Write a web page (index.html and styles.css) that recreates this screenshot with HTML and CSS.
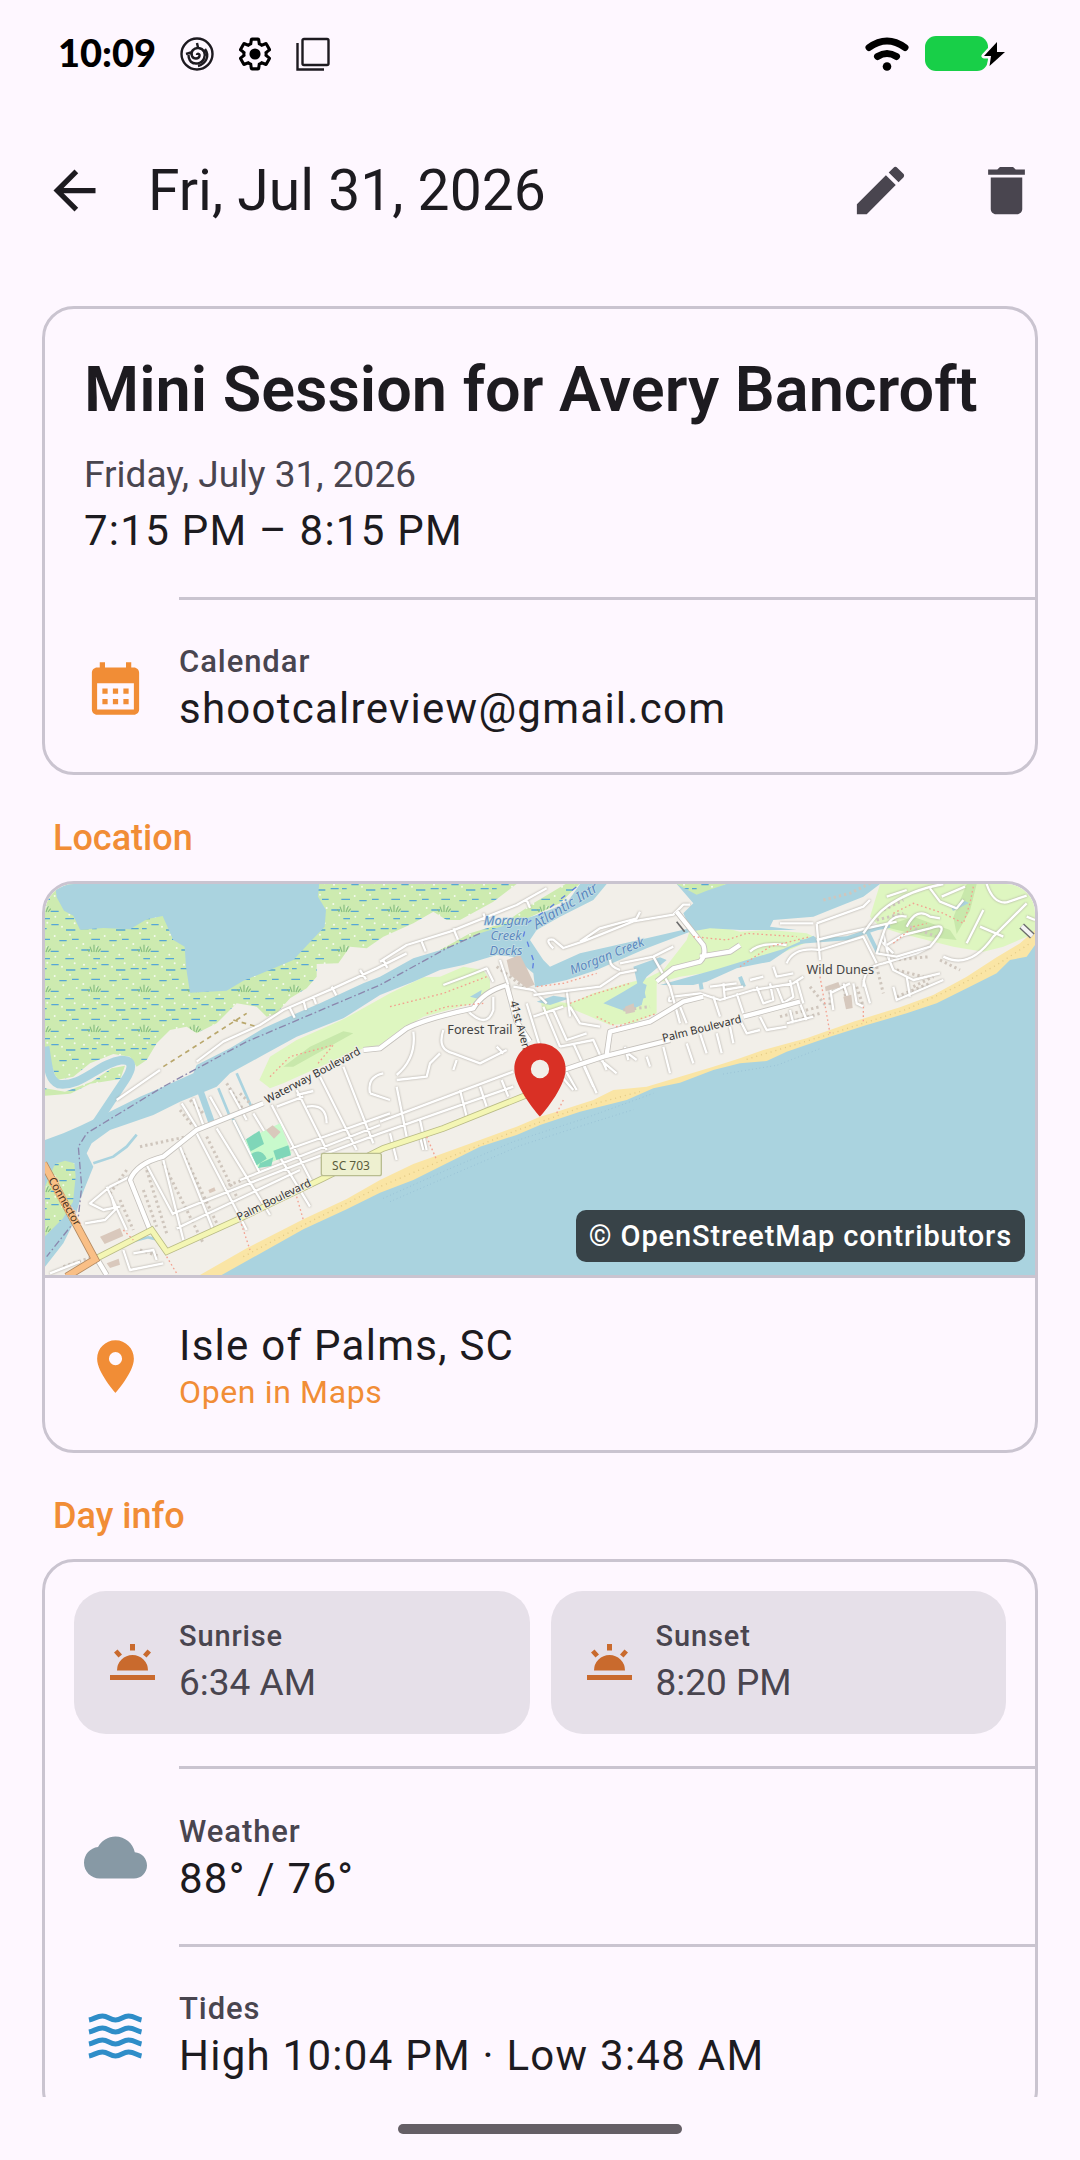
FILE: index.html
```html
<!DOCTYPE html>
<html lang="en">
  <head>
    <meta charset="UTF-8" />
    <meta name="viewport" content="width=device-width, initial-scale=1.0" />
    <title>Fri, Jul 31, 2026</title>

    <link rel="stylesheet" href="styles.css">
  </head>
  <body>
    <!-- status bar -->
    <div class="status">
      <span class="clock">10:09</span>
      <svg class="s-icon" viewBox="0 0 34 34" fill="none" stroke="#1d1a20" stroke-width="2.400">
        <circle cx="17" cy="17" r="15.5" />
        <path d="M17 18c0-2 3-1.500 2.500 1-.6 3-6 3.500-7.500 0-1.800-4.500 2-8.500 6.500-8 5.500.6 7.500 6 5.500 10.500-2.500 5.500-9.500 6.500-13.500 3M6 17l5-1.500M17 6l1 4.500M8.500 18c0 4 2 7 5 8.500M25 12c5 7 1 15-7 17" />
      </svg>
      <svg class="s-icon" viewBox="1 1 22 22">
        <path fill="none" stroke="#000" stroke-width="2" d="M19.14 12.94c.04-.3.06-.61.06-.94 0-.32-.02-.64-.07-.94l2.030-1.580c.18-.14.23-.41.12-.61l-1.920-3.320c-.12-.22-.37-.29-.59-.22l-2.390.96c-.5-.38-1.030-.7-1.620-.94l-.36-2.540c-.04-.24-.24-.41-.48-.41h-3.840c-.24 0-.43.17-.47.41l-.36 2.540c-.59.24-1.130.57-1.620.94l-2.390-.96c-.22-.08-.47 0-.59.22L2.740 8.870c-.12.21-.08.47.12.61l2.030 1.580c-.05.3-.09.63-.09.94s.02.64.07.94l-2.030 1.580c-.18.14-.23.41-.12.61l1.920 3.320c.12.22.37.29.59.22l2.390-.96c.5.38 1.030.7 1.620.94l.36 2.540c.05.24.24.41.48.41h3.840c.24 0 .44-.17.47-.41l.36-2.540c.59-.24 1.130-.56 1.620-.94l2.390.96c.22.08.47 0 .59-.22l1.920-3.320c.12-.22.07-.47-.12-.61l-2.010-1.580z" />
        <circle cx="12" cy="12" r="3.600" />
      </svg>
      <svg class="s-icon" viewBox="0 0 34 34" fill="none" stroke="#1d1a20" stroke-width="2.400">
        <rect x="6.500" y="2" width="26" height="26" rx="1.500" />
        <path d="M1.500 6v26.500H28" />
      </svg>
      <svg class="wifi" viewBox="0 0 44 34" fill="none" stroke="#000" stroke-width="7" stroke-linecap="round">
        <path d="M4 10.500Q22-2.500 40 10.500M12.500 19.500Q22 13.500 31.500 19.500" />
        <circle cx="22" cy="29.500" r="4.300" fill="#000" stroke="none" />
      </svg>
      <svg class="battery" viewBox="0 0 80 36">
        <rect y="0" width="63" height="35" rx="11" fill="#18cf48" />
        <path d="M72 6L59 20h7l-1.500 10L80 16h-8z" fill="#000" stroke="#fef7ff" stroke-width="5" stroke-linejoin="round" paint-order="stroke" />
      </svg>
    </div>

    <!-- top app bar -->
    <header class="app-bar">
      <button class="icon-btn back" aria-label="Back">
        <svg viewBox="0 0 24 24"><path d="M20 11H7.830l5.590-5.590L12 4l-8 8 8 8 1.410-1.410L7.830 13H20v-2z" /></svg>
      </button>
      <h1 class="bar-title">Fri, Jul 31, 2026</h1>
      <button class="icon-btn" aria-label="Edit">
        <svg viewBox="0 0 24 24"><path d="M3 17.250V21h3.750L17.810 9.940l-3.750-3.750L3 17.250zM20.710 7.040c.39-.39.39-1.020 0-1.410l-2.340-2.340c-.39-.39-1.020-.39-1.410 0l-1.830 1.830 3.750 3.750 1.830-1.830z" /></svg>
      </button>
      <button class="icon-btn" aria-label="Delete">
        <svg viewBox="0 0 24 24"><path d="M6 19c0 1.100.9 2 2 2h8c1.100 0 2-.9 2-2V7H6v12zM19 4h-3.500l-1-1h-5l-1 1H5v2h14V4z" /></svg>
      </button>
    </header>

    <main class="content">
      <!-- session card -->
      <section class="card first">
        <div class="session">
          <h2>Mini Session for Avery Bancroft</h2>
          <p class="date">Friday, July 31, 2026</p>
          <p class="value">7:15 PM – 8:15 PM</p>
        </div>
        <hr />
        <div class="row">
          <svg class="row-icon orange" viewBox="0 0 24 24"><path fill-rule="evenodd" d="M19 4h-1V2h-2v2H8V2H6v2H5c-1.110 0-2 .9-2 2v14c0 1.100.89 2 2 2h14c1.100 0 2-.9 2-2V6c0-1.100-.9-2-2-2zm0 16H5V10h14v10zM7 12h2v2H7zM11 12h2v2h-2zM15 12h2v2h-2zM7 16h2v2H7zM11 16h2v2h-2zM15 16h2v2h-2z" /></svg>
          <div class="row-text">
            <p class="label">Calendar</p>
            <p class="value">shootcalreview@gmail.com</p>
          </div>
        </div>
      </section>

      <h3 class="section-title">Location</h3>
      <section class="card">
        <div class="map">
          <svg class="map-art" viewBox="45 252 2970 1173" preserveAspectRatio="xMidYMid slice">
            <defs>
              <pattern id="marsh" width="150" height="120" patternUnits="userSpaceOnUse">
                <rect width="150" height="120" fill="#cdebb0" />
                <g fill="#f6faf0">
                  <circle cx="12" cy="14" r="3" /><circle cx="52" cy="8" r="3" /><circle cx="96" cy="20" r="3" /><circle cx="134" cy="10" r="3" />
                  <circle cx="30" cy="40" r="3" /><circle cx="74" cy="48" r="3" /><circle cx="120" cy="44" r="3" />
                  <circle cx="10" cy="72" r="3" /><circle cx="52" cy="80" r="3" /><circle cx="100" cy="76" r="3" /><circle cx="140" cy="84" r="3" />
                  <circle cx="28" cy="106" r="3" /><circle cx="76" cy="110" r="3" /><circle cx="118" cy="104" r="3" />
                </g>
                <path d="M2 26h24M64 14h22M108 30h28M34 58h26M88 62h22M126 58h20M4 90h26M62 94h24M106 116h26M40 116h20M36 26h14" stroke="#55a6d6" stroke-width="4" />
                <path d="M36 96l-6-16M42 96V74M48 96l7-18M54 96l8-10M28 96l-6-8" stroke="#86bd80" stroke-width="3.500" fill="none" />
              </pattern>
            </defs>

            <rect x="45" y="252" width="2970" height="1173" fill="#f2efe9" />

            <!-- marsh and lagoon -->
            <g fill="url(#marsh)">
              <path d="M45 252H1460L1390 305 1290 360 1250 360 1210 335 1150 370 1060 410 1010 445 960 440 925 490 860 492 860 530 830 565 780 595 740 640 710 650 680 620 620 610 560 670 500 700 470 680 420 690 380 730 350 780 320 800 300 770 250 762 180 790 130 830 80 840 45 740z" />
              <path d="M45 865l60 10 80-30 60-40 40-8-14 40-90 14-60 30-76 6z" />
              <path d="M1230 450l90-50 100-30 90-60 100-60h40l-60 60-130 60-110 60-100 28z" />
            </g>
            <path fill="#aad3df" d="M75 252l5 40 22 40 28 15 20 42 70-5 80 4 50-30 48-10 32 72 34 20 4 60 12 78 110-6 50-30 70-28 80-34 56-60 38-40 4-50-24-40 4-43z" />

            <!-- golf courses -->
            <g fill="#def6c0">
              <path d="M688 840L720 770 800 720 940 658 1080 580 1180 532 1230 530 1300 500 1360 510 1380 540 1380 570 1330 610 1180 650 1110 690 1050 735 1000 745 860 805 760 850 720 865z" />
              <path d="M1530 600L1620 610 1690 580 1790 550 1850 535 1900 510 1970 420 1980 390 2050 375 2130 395 2220 390 2330 400 2360 415 2230 470 2050 515 1950 530 1880 550 1880 640 1810 670 1740 675 1670 645 1610 620 1540 635z" />
              <path d="M2550 252H3015V400L2920 440 2860 455 2770 440 2690 420 2610 400 2550 380 2520 350z" />
            </g>
            <g fill="#c8e8ab">
              <path d="M760 800L840 740 940 694 970 700 880 750 790 800zM2560 380L2650 350 2760 390 2780 420 2690 410zM2810 252h30l-20 80-40 70-10-50z" />
            </g>

            <!-- water -->
            <g fill="#aad3df">
              <path d="M45 1020L100 1000 150 978 230 940 330 890 400 860 490 820 500 795 600 745 700 685 800 640 870 610 1000 550 1050 530 1150 475 1250 445 1350 400 1450 368 1520 345 1610 310 1650 252H1730L1690 300 1590 350 1520 390 1500 420 1540 480 1560 500 1650 460 1850 415 1980 385 1960 340 1990 310 1940 252H2550L2500 290 2400 330 2350 350 2230 360 2220 380 2300 390 2130 390 2040 385 1980 395 1850 445 1700 510 1610 540 1515 562 1510 520 1450 470 1400 465 1300 495 1230 510 1150 545 1050 585 940 655 800 710 700 765 600 820 560 860 450 905 370 945 240 990 185 1030 170 1060 190 1100 170 1150 150 1200 130 1270 100 1330 45 1400z" />
              <path d="M1720 610L1780 575 1830 545 1850 555 1835 615 1790 635zM1320 590l35-20-5 28zM1890 555L2070 505 2160 477 2260 447 2350 407 2360 415 2280 445 2220 485 2120 505 2030 545 1990 555zM1520 605l50-18 50 8-60 20zM1810 500l80-28 20 8-60 50-20 30-10-30zM2765 325l40-22 12 6-48 24z" />
            </g>
            <path fill="url(#marsh)" d="M45 1160L75 1092 105 1082 133 1090 137 1130 129 1205 99 1255 45 1309z" />
            <path fill="url(#marsh)" d="M1940 252h150l-60 20-30 12z" />
            <g fill="none" stroke="#aad3df">
              <path d="M45 740c10 60 10 100 40 112 70 10 120-62 190-72 40 0 30 30 10 60l-100 150" stroke-width="26" />
              <path d="M510 870l34 95" stroke-width="20" />
              <path d="M565 865l35 85M620 820l44 100M608 955l70 140M285 1330l70-18 40 10" stroke-width="8" />
              <path d="M190 1090l60-20 40-30 30-36" stroke-width="8" />
              <path d="M2310 425l140-10 90-30 40-8M2510 390l35 70M2130 530l12 30M2010 540l5 28" stroke-width="12" />
              <path d="M1820 505l20 90" stroke-width="16" />
            </g>
            <path d="M1350 400L1250 445 1050 555 650 725 400 860 170 1000 145 1040 155 1160 145 1250 50 1370" fill="none" stroke="#8b87ad" stroke-width="4" stroke-dasharray="22 8 5 8" />
            <path d="M1480 410l10-40 60-40 100-78M1510 480l-20-60M1508 505l4-30" fill="none" stroke="#5f7fe0" stroke-width="4" stroke-dasharray="16 26" />

            <!-- beach and ocean -->
            <path fill="#fae5a5" d="M510 1425L650 1345 820 1258 950 1197 1050 1140 1150 1092 1240 1060 1350 1020 1460 980 1530 950 1590 932 1690 900 1750 870 1850 860 1950 830 2050 800 2130 775 2200 750 2330 715 2470 665 2610 622 2710 585 2810 530 2900 472 2970 430 3015 390V1425z" />
            <path fill="#aad3df" d="M575 1425L700 1355 820 1288 950 1228 1050 1178 1150 1140 1240 1095 1350 1040 1460 1005 1530 975 1650 935 1790 900 1870 865 1950 848 2050 810 2130 790 2210 783 2270 755 2400 710 2510 675 2630 640 2720 610 2830 555 2900 520 2940 480 2990 470 3015 435V1425z" />
            <path d="M1060 1195l190-85 200-85 200-65 220-80M1080 1205l180-78 210-90 180-58 160-50M2080 822l160-26 130-50" fill="none" stroke="#93bcd3" stroke-width="3" stroke-dasharray="2 9" />
            <path d="M640 1370L820 1275 1050 1160 1250 1075 1450 995 1650 923 1830 875M2150 778L2400 702 2630 628 2780 560 2900 495 3000 430" fill="none" stroke="#e2c984" stroke-width="4" stroke-dasharray="3 12" />

            <!-- buildings -->
            <g class="houses">
              <path d="M330 1040l140-30M290 1110l-50 70M400 1090l120 240M350 1110l60 190M460 1060l110 230M530 1010l100 200M580 1160l60-20M340 1170l40 110M450 930l40 50M480 900l40 40M590 850l50 80M630 880l40 40M100 1400l90-30M330 1350l60 20M430 1350l170-80M270 1200l40 90" />
              <path d="M2250 650l120-30M2270 670l100-30M2340 560l50 60M2400 560v60M2440 550l10 60M2480 560l20 60M2590 480l110-10M2600 510l80 20M2650 560l60-30M2540 500l20 80M2730 480l60 30M2600 590l100-40M2380 300l80-20 60-30" />
              <path d="M2560 330l60-30M2540 360l80-20M2640 380l80 30M1400 500l80 60M1440 480l50 60M1780 630l80-10" />
            </g>

            <!-- minor roads -->
            <g class="roads">
              <path d="M260 900l130-90M500 785l80-60 110-50 70-45 150-65 130-60 90-45M780 625l14 28M820 600l8 30M850 590l8 22M905 560l14 26M990 510l18 28M1060 480l12 24
                M1050 485l80-50 130-40 200-80 90-50M1175 425l12 30M1270 385l14 34M1360 340l12 30M1490 300l10 24
                M500 1000l150 290M560 985l160 260M610 960l80 160M670 940l170 280M725 915l120 230M450 1040l100 250M400 1080l60 240M350 1095l80 150M455 910l50 80M490 895l30 80M540 890l40 70M600 870l50 90
                M430 1240l380-150 240-90M440 1285l370-175M630 1140l420-165M770 1050l310-110M800 870l90 180M870 830l110 220M940 800l90 230M800 885l50-12M830 920q60-10 60 50M740 920l80-30
                M300 1130l-60 30-60 50 40 20 50-10M230 1160l60 130M165 1270l60-10 30-30-10-40M280 1350l20 60 100-20M310 1360l60-10 10 30M60 1420l90-35
                M1020 880q-10-50 40-60M1020 880l60 20M1150 695q10 80-50 130M1310 630q60 60 80 0v-40M1240 690q-20 60 30 70l80 30 80-40M1230 760l-30 30-10 40-90 10M1280 780l-10 30M1400 740l20 20
                M1050 965l400-150M1050 1000l400-140M1100 860l30 150M1170 960l20 90M1290 870l20 80M1350 860l20 60M1415 840l20 50M1080 1000l20 80M1180 1050l-10-40
                M1240 555l80-30 50-20 20 40M1450 560l60 10 40 40M1410 480l30 90M1490 610l40 130M1540 620l50 120M1570 630l40 90 60-20M1510 650l90-30M1610 570l10 80M1620 620l30 50 60 10
                M1590 740l100-20 40 90M1630 730l60 130M1660 790l40 90M1700 770l60 50M1560 790l70 80M1600 800l40 70
                M1785 740l10 40M1850 770l10 30M1900 740l20 80M1970 730l20 60M2010 700l20 60M2060 700l15 60M1780 750l40 30
                M1930 590l80-10 60 20 100-30 120-20 30-20M1930 600q-20 10-10-10M1950 620l20 50M2050 590l20 60M2040 560l80-10M2080 550l5 50M2120 580l20 60M2180 560l20 50 30-10-10-50M2240 560l20 50 30-20-10-50M2160 540l40-10M2230 500l10 30 50-10M2080 570l60-10
                M2100 680l10 50M2130 660l20 40 40-10M2190 650l20 40 60-10M2280 630l10 40M2310 610l20 50M2300 540l20 70M2270 670l80-20
                M2500 560q0-60 60-70l100-30 40-20M2570 460l20 50 60 30 80-20M2560 400l20 90M2550 420l40 40M2590 560l10 40 140-60M2630 530l10 60M2470 550l10 60 20 10M2400 560l10 70M2440 550l20 60M2500 540l20 70M2400 580l60-30" />
              <path d="M1570 445q-30-30 0-26l30 25 60-20 150-60 120-20 30-30 20 0M1650 425l60-40 110-30 10-20M1770 490l100-20 60-30M1510 585l200-25 60-40 50-10M1870 470l50 90 30 110M1770 510q-30-10-30-30" />
              <path d="M2160 455q30-30 110-20M2250 370h100M2360 370l10 110M2360 370l140-50 20-20M2360 420l60-15 180-40M2270 490q20-50 100-40l130-40 40 80M2560 400q20-60 70-50M2560 400l-20 60 60 10 100-30q70-80 0-55l-80 20-50 30" />
              <path d="M2500 400q40-60 70-80 70-50 170-68M2630 380q30-60 70-30l30 5M2570 290l60-20M2700 265l30 40 50 20 20-25M2735 290l70-30M2740 470q80 40 150-60l100-100M2860 330l-40 80-10 20M2850 380l70 30M2870 252q20 60 60 55l60-20M2990 350l25 10" />
            </g>

            <!-- main roads: casing first, then the white fill -->
            <g class="main-casing">
              <path d="M230 1425l-30-50M360 1290l-60-150q20-50 100-70l100-80 200-80M1000 750l50-5 80-60q60-30 200-60 30-50 100-70M1430 555l30 110 40 60M1600 810l120-40 200-50M2140 650l170-45M1880 545l50-40 80-20q20-20 10-50l-80-100M2010 470l90-15 30-20M1730 765l10-70 120-30 100-60 60-15" />
            </g>
            <g class="main-fill">
              <path d="M230 1425l-30-50M360 1290l-60-150q20-50 100-70l100-80 200-80M1000 750l50-5 80-60q60-30 200-60 30-50 100-70M1430 555l30 110 40 60M1600 810l120-40 200-50M2140 650l170-45M1880 545l50-40 80-20q20-20 10-50l-80-100M2010 470l90-15 30-20M1730 765l10-70 120-30 100-60 60-15" />
            </g>
            <path d="M200 1375L365 1290 410 1355 620 1260 880 1135 1060 1045 1240 985 1490 885" fill="none" stroke="#b9bb86" stroke-width="20" />
            <path d="M200 1375L365 1290 410 1355 620 1260 880 1135 1060 1045 1240 985 1490 885" fill="none" stroke="#f4f6b4" stroke-width="15" />
            <path d="M40 1090l155 288-85 52" fill="none" stroke="#b38a62" stroke-width="24" />
            <path d="M40 1090l155 288-85 52" fill="none" stroke="#f9bf86" stroke-width="19" />
            <path d="M2975 378l32 30" stroke="#6b6b6b" stroke-width="20" />
            <path d="M2975 378l32 30" stroke="#f4f4f4" stroke-width="12" />
            <path d="M1940 365l24 30" stroke="#6b6b6b" stroke-width="5" />

            <!-- footpaths -->
            <path class="path" d="M720 830l60-60 130-35-50 60M1080 620l160-40 130-50M1190 640l60-20 110-10M1520 560l80-10 100-30M1620 610l80-30 100-30M1700 650l60 30 120-40M1990 410l100 10 60-20 150 10M2130 500l90-60 120-30M2590 340l60-30 90 30 60 30 20-60 10-50M2590 430l60-50 40-10" />
            <path class="path" d="M630 1260l30 90M800 1190l20 70M1190 1010l30 70M410 1370l30 50M2370 530l30 170M2500 620v50M1600 900l-20 40M280 1290l30 30" />
            <path d="M400 800l110-70 140-90M610 660l70 20" fill="none" stroke="#b9a76c" stroke-width="5" stroke-dasharray="14 12" />

            <!-- park -->
            <path fill="#c8facc" d="M645 1020l105-50 35 90-100 45z" />
            <path fill="#7fd6b8" d="M648 1018l40-26 14 40-40 22zM730 1052l45-16 8 30-44 14zM664 1062q30-20 46 14l-30 20zM690 1090l40-18-6 26-40 6z" />
            <path fill="#d9c8bc" d="M708 990l20-14 24 20-20 20zM210 1310l60-26 10 24-56 24zM230 1390l36-14 4 18-30 10zM535 1170l18-8 4 10-18 8z" />
            <path fill="#d6c8bd" d="M2385 560l40-14 6 16-44 12zM2440 590l24-6 4 40-20 4zM1785 620l26-10 4 26-28 6zM1430 480l40-16 20 40 24 50-24 10-50-40z" />

            <!-- place names -->
            <g class="names">
              <text x="1350" y="702" text-anchor="middle">Forest Trail</text>
              <text x="2431" y="522" text-anchor="middle">Wild Dunes</text>
              <text class="street" transform="translate(712 911) rotate(-28)">Waterway Boulevard</text>
              <text class="street" transform="translate(627 1263) rotate(-26)">Palm Boulevard</text>
              <text class="street" transform="translate(1900 726) rotate(-14)">Palm Boulevard</text>
              <text class="street" transform="translate(1440 606) rotate(75)">41st Avenue</text>
              <text class="street brown" transform="translate(54 1140) rotate(60)">Connector</text>
            </g>
            <g class="water-names">
              <text x="1428" y="374" text-anchor="middle">Morgan</text>
              <text x="1428" y="420" text-anchor="middle">Creek</text>
              <text x="1428" y="466" text-anchor="middle">Docks</text>
              <text transform="translate(1626 524) rotate(-22)">Morgan Creek</text>
              <text class="big" transform="translate(1520 388) rotate(-32)">Atlantic Intr</text>
            </g>
            <rect x="874" y="1060" width="180" height="67" rx="6" fill="#eef0d0" stroke="#b9bd90" stroke-width="4" />
            <text class="shield" x="963" y="1109" text-anchor="middle">SC 703</text>
          </svg>
          <svg class="map-pin" viewBox="0 0 24 24"><path d="M12 2C8.130 2 5 5.130 5 9c0 5.250 7 13 7 13s7-7.750 7-13c0-3.870-3.130-7-7-7zm0 9.500a2.500 2.500 0 0 1 0-5 2.500 2.500 0 0 1 0 5z" /></svg>
          <span class="credit">© OpenStreetMap contributors</span>
        </div>
        <div class="row">
          <svg class="row-icon orange" viewBox="0 0 24 24"><path d="M12 2C8.130 2 5 5.130 5 9c0 5.250 7 13 7 13s7-7.750 7-13c0-3.870-3.130-7-7-7zm0 9.500a2.500 2.500 0 0 1 0-5 2.500 2.500 0 0 1 0 5z" /></svg>
          <div class="row-text">
            <p class="value">Isle of Palms, SC</p>
            <a class="map-link" href="#">Open in Maps</a>
          </div>
        </div>
      </section>

      <h3 class="section-title">Day info</h3>
      <section class="card">
        <div class="tiles">
          <div class="tile">
            <svg class="tile-icon" viewBox="0 0 50 50"><path d="M2 38h45v5H2zM9 33.500a15.500 15.500 0 0 1 31 0zM22 7h5v6.500h-5zM6 15.500l3.500-3 4.500 5-3.500 3zM43 15.500l-3.500-3-4.500 5 3.500 3z" /></svg>
            <div>
              <p class="tile-label">Sunrise</p>
              <p class="tile-value">6:34 AM</p>
            </div>
          </div>
          <div class="tile">
            <svg class="tile-icon" viewBox="0 0 50 50"><path d="M2 38h45v5H2zM9 33.500a15.500 15.500 0 0 1 31 0zM22 7h5v6.500h-5zM6 15.500l3.500-3 4.500 5-3.500 3zM43 15.500l-3.500-3-4.500 5 3.500 3z" /></svg>
            <div>
              <p class="tile-label">Sunset</p>
              <p class="tile-value">8:20 PM</p>
            </div>
          </div>
        </div>
        <hr />
        <div class="row">
          <svg class="row-icon grey" viewBox="0 0 24 24"><path d="M19.350 10.040C18.670 6.590 15.640 4 12 4 9.110 4 6.600 5.640 5.350 8.040 2.340 8.360 0 10.910 0 14c0 3.310 2.690 6 6 6h13c2.760 0 5-2.240 5-5 0-2.640-2.050-4.780-4.650-4.960z" /></svg>
          <div class="row-text">
            <p class="label">Weather</p>
            <p class="value">88° / 76°</p>
          </div>
        </div>
        <hr />
        <div class="row">
          <svg class="row-icon" viewBox="0 0 63 63" fill="none" stroke="#2f8dc8" stroke-width="5">
            <path d="M5 16C10 15 13 12 18.500 12S26 16 31.500 16 39 12 44.500 12 53 15 57.500 16M5 28C10 27 13 24 18.500 24S26 28 31.500 28 39 24 44.500 24 53 27 57.500 28M5 40C10 39 13 36 18.500 36S26 40 31.500 40 39 36 44.500 36 53 39 57.500 40M5 52C10 51 13 48 18.500 48S26 52 31.500 52 39 48 44.500 48 53 51 57.500 52" />
          </svg>
          <div class="row-text">
            <p class="label">Tides</p>
            <p class="value">High 10:04 PM · Low 3:48 AM</p>
          </div>
        </div>
      </section>
    </main>

    <!-- gesture bar -->
    <div class="nav-bar"><span class="handle"></span></div>
  </body>
</html>
```
FILE: styles.css
```css
* {
  padding: 0;
  margin: 0;
  box-sizing: border-box;
}

:root {
  --bg: #fef7ff;
  --text: #1d1b20;
  --muted: #49454f;
  --line: #cac4d0;
  --orange: #f18d36;
  --tracking: 0.03em;
}

body {
  height: 100vh;
  display: flex;
  flex-direction: column;
  background-color: var(--bg);
  color: var(--text);
  font-family: Roboto, "Liberation Sans", sans-serif;
}

svg {
  display: block;
  flex-shrink: 0;
}

/* status bar */
.status {
  height: 107px;
  padding: 0 75px 0 58px;
  display: flex;
  align-items: center;
  gap: 24px;
  flex-shrink: 0;
}

.clock {
  font-family: Lato, sans-serif;
  font-size: 38px;
  line-height: 44px;
  padding-bottom: 4px;
  font-weight: 900;
  color: #000;
}

.s-icon {
  width: 34px;
  height: 34px;
}

.wifi {
  width: 44px;
  height: 34px;
  margin-left: auto;
}

.battery {
  width: 80px;
  height: 36px;
  margin-left: -8px;
}

/* app bar */
.app-bar {
  height: 167px;
  padding: 0 42px 0 43px;
  display: flex;
  align-items: center;
  gap: 63px;
  flex-shrink: 0;
}

.icon-btn {
  width: 63px;
  height: 63px;
  border: none;
  background: none;
  cursor: pointer;
}

.icon-btn svg {
  width: 63px;
  height: 63px;
  fill: var(--muted);
}

.back {
  margin-right: -21px;
}

.back svg {
  fill: var(--text);
}

.bar-title {
  flex: 1;
  font-size: 57px;
  font-weight: 400;
}

/* scrolling content */
.content {
  flex: 1;
  min-height: 0;
  overflow: hidden;
  padding: 32px 42px 0;
}

.card {
  border: 3px solid var(--line);
  border-radius: 32px;
  overflow: hidden;
}

.card hr {
  border: none;
  height: 3px;
  margin-left: 134px;
  background-color: var(--line);
}

.session {
  padding: 39px 39px 40px;
}

.session h2 {
  font-size: 63px;
  line-height: 84px;
  font-weight: 600;
}

.date {
  margin: 17px 0 4px;
  font-size: 37px;
  line-height: 52px;
  color: var(--muted);
}

.value {
  font-size: 42px;
  line-height: 52px;
  letter-spacing: var(--tracking);
}

.label {
  font-size: 31px;
  line-height: 42px;
  font-weight: 500;
  letter-spacing: var(--tracking);
  color: var(--muted);
}

.row {
  display: flex;
  align-items: center;
  gap: 32px;
  min-height: 175px;
  padding: 2px 39px 0;
}

.row:last-child {
  min-height: 172px;
  padding-top: 4px;
}

.row-icon {
  width: 63px;
  height: 63px;
}

.orange {
  fill: var(--orange);
}

.grey {
  fill: #8799a5;
}

.section-title {
  margin: 37px 11px 17px;
  font-size: 36px;
  line-height: 52px;
  font-weight: 500;
  color: var(--orange);
}

/* map */
.map {
  position: relative;
  border-bottom: 3px solid var(--line);
}

.map-art {
  width: 100%;
  height: 391px;
}

.houses path {
  fill: none;
  stroke: #cfc6bd;
  stroke-width: 9;
  stroke-dasharray: 7 9;
}

.roads path {
  fill: none;
  stroke: #fff;
  stroke-width: 7;
  stroke-linejoin: round;
  filter: drop-shadow(0 0 3px #a8a49e);
}

.main-casing path {
  fill: none;
  stroke: #c4c0bb;
  stroke-width: 18;
  stroke-linejoin: round;
}

.main-fill path {
  fill: none;
  stroke: #fff;
  stroke-width: 13;
  stroke-linejoin: round;
}

.path {
  fill: none;
  stroke: #f3a08f;
  stroke-width: 4;
  stroke-dasharray: 5 8;
}

.names text,
.water-names text,
.shield {
  font-family: "Noto Sans", sans-serif;
  font-size: 38px;
  fill: #444;
  stroke: #f2efe9;
  stroke-width: 6px;
  paint-order: stroke;
}

.names .street {
  font-size: 33px;
  fill: #333;
}

.names .brown {
  fill: #4a3420;
  stroke: #f9bf86;
}

.water-names text {
  font-style: italic;
  fill: #5b8ac0;
  stroke: #c9dfe6;
  stroke-width: 4px;
}

.water-names .big {
  font-size: 42px;
}

.shield {
  font-size: 36px;
  fill: #5a5c3c;
  stroke: none;
}

.map-pin {
  position: absolute;
  top: 50%;
  left: 50%;
  width: 88px;
  height: 88px;
  transform: translate(-50%, -50%);
  fill: #d93025;
}

.credit {
  position: absolute;
  right: 10px;
  bottom: 13px;
  padding: 0 13px;
  border-radius: 10px;
  background-color: #384348;
  color: #fff;
  font-size: 29px;
  line-height: 52px;
  font-weight: 500;
  letter-spacing: var(--tracking);
}

.map-link {
  display: block;
  font-size: 32px;
  line-height: 40px;
  letter-spacing: 0.02em;
  color: var(--orange);
  text-decoration: none;
}

/* sunrise / sunset */
.tiles {
  display: grid;
  grid-template-columns: 1fr 1fr;
  gap: 21px;
  padding: 29px 29px 32px;
}

.tile {
  display: flex;
  align-items: center;
  gap: 21px;
  padding: 24px 34px 25px;
  border-radius: 32px;
  background-color: #e6e0e9;
  color: var(--muted);
}

.tile-icon {
  width: 50px;
  height: 50px;
  fill: #c96a2d;
}

.tile-label {
  font-size: 29px;
  line-height: 42px;
  font-weight: 500;
  letter-spacing: var(--tracking);
}

.tile-value {
  font-size: 37px;
  line-height: 52px;
}

/* gesture bar */
.nav-bar {
  height: 63px;
  display: flex;
  align-items: center;
  justify-content: center;
  flex-shrink: 0;
}

.handle {
  width: 284px;
  height: 10px;
  border-radius: 5px;
  background-color: #655f66;
}
```
